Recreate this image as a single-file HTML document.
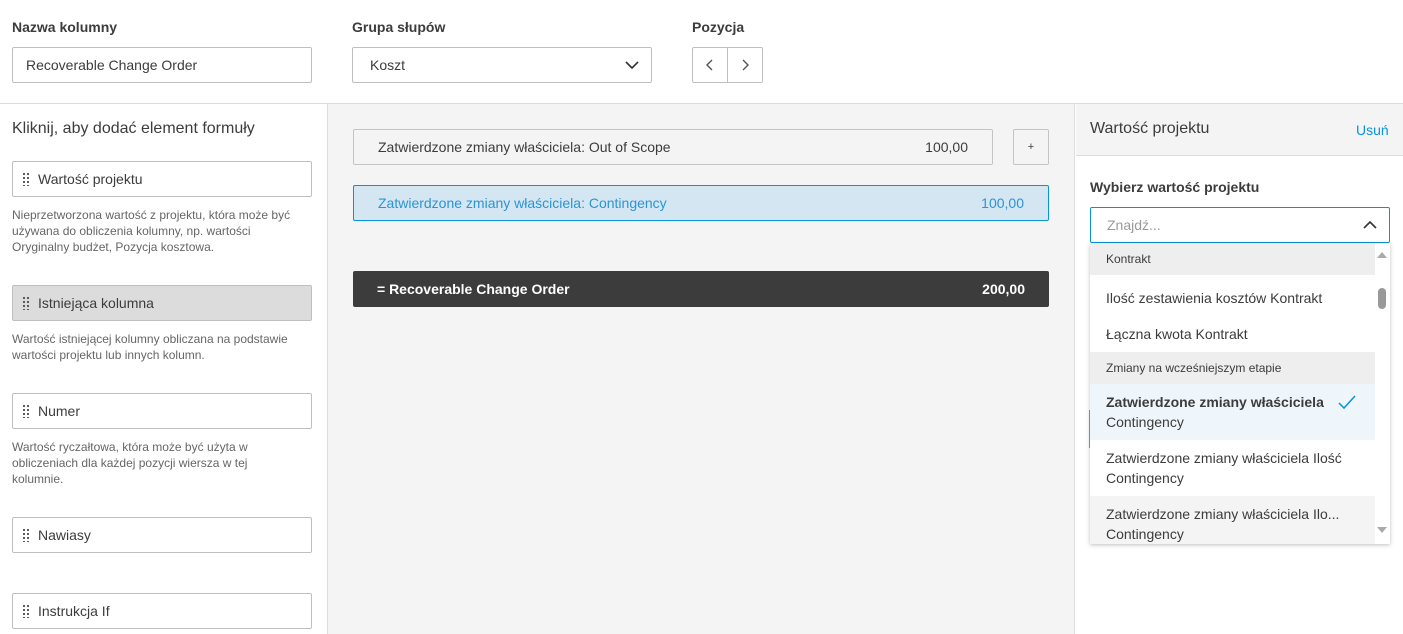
<!DOCTYPE html>
<html><head><meta charset="utf-8"><style>
*{box-sizing:border-box;margin:0;padding:0}
body{width:1403px;height:634px;overflow:hidden;background:#fff;font-family:"Liberation Sans",sans-serif;color:#3c3c3c;position:relative;font-size:14px}
.a{position:absolute}
.lbl{font-weight:bold;font-size:14px;color:#3c3c3c}
.inp{border:1px solid #bfbfbf;border-radius:2px;background:#fff;display:flex;align-items:center;padding-left:13px;font-size:14px}
.item{border:1px solid #bfbfbf;border-radius:2px;background:#fff;display:flex;align-items:center;font-size:14px;width:300px;height:36px;left:12px}
.dots{width:8px;height:14px;margin:0 8px 0 9px;background-image:radial-gradient(circle,#555 1px,transparent 1.3px);background-size:4px 4px}
.desc{font-size:12px;line-height:16px;color:#666;left:12px;width:310px;white-space:nowrap}
.dd{font-size:14px;color:#3c3c3c;padding-left:16px;display:flex;align-items:center;left:0;width:285px}
</style></head><body>
<div class="a lbl" style="left:12px;top:19px">Nazwa kolumny</div>
<div class="a lbl" style="left:352px;top:19px">Grupa słupów</div>
<div class="a lbl" style="left:692px;top:19px">Pozycja</div>
<div class="a inp" style="left:12px;top:47px;width:300px;height:36px">Recoverable Change Order</div>
<div class="a inp" style="left:352px;top:47px;width:300px;height:36px;padding-left:17px">Koszt
<svg class="a" style="right:12px;top:12px" width="14" height="10" viewBox="0 0 14 10"><path d="M1 2l6 6 6-6" fill="none" stroke="#333" stroke-width="1.6"/></svg></div>
<div class="a" style="left:692px;top:47px;width:71px;height:36px;border:1px solid #bfbfbf;border-radius:2px"><div class="a" style="left:34px;top:0;width:1px;height:34px;background:#bfbfbf"></div>
<svg class="a" style="left:12px;top:10px" width="10" height="14"><path d="M7 2L2 7l5 5" fill="none" stroke="#555" stroke-width="1.4"/></svg>
<svg class="a" style="left:47px;top:10px" width="10" height="14"><path d="M3 2l5 5-5 5" fill="none" stroke="#555" stroke-width="1.4"/></svg></div>
<div class="a" style="left:0;top:103px;width:1403px;height:1px;background:#dcdcdc"></div>
<div class="a" style="left:327px;top:104px;width:748px;height:530px;background:#f4f4f4;border-left:1px solid #dcdcdc;border-right:1px solid #dcdcdc"></div>
<div class="a" style="left:12px;top:120px;font-size:16px">Kliknij, aby dodać element formuły</div>
<div class="a item" style="top:161px"><div class="dots"></div>Wartość projektu</div>
<div class="a desc" style="top:207px">Nieprzetworzona wartość z projektu, która może być<br>używana do obliczenia kolumny, np. wartości<br>Oryginalny budżet, Pozycja kosztowa.</div>
<div class="a item" style="top:285px;background:#dcdcdc"><div class="dots"></div>Istniejąca kolumna</div>
<div class="a desc" style="top:331px">Wartość istniejącej kolumny obliczana na podstawie<br>wartości projektu lub innych kolumn.</div>
<div class="a item" style="top:393px"><div class="dots"></div>Numer</div>
<div class="a desc" style="top:439px">Wartość ryczałtowa, która może być użyta w<br>obliczeniach dla każdej pozycji wiersza w tej<br>kolumnie.</div>
<div class="a item" style="top:517px"><div class="dots"></div>Nawiasy</div>
<div class="a item" style="top:593px"><div class="dots"></div>Instrukcja If</div>
<div class="a" style="left:353px;top:129px;width:640px;height:36px;border:1px solid #c4c4c4;border-radius:2px;background:#f4f4f4;display:flex;align-items:center;padding:0 24px;justify-content:space-between"><span>Zatwierdzone zmiany właściciela: Out of Scope</span><span>100,00</span></div>
<div class="a" style="left:1013px;top:129px;width:36px;height:36px;border:1px solid #c4c4c4;border-radius:2px;text-align:center;line-height:34px;font-size:11px">+</div>
<div class="a" style="left:353px;top:185px;width:696px;height:36px;border:1px solid #0696d7;border-radius:2px;background:#d4e6f2;color:#2b95d3;display:flex;align-items:center;padding:0 24px;justify-content:space-between"><span>Zatwierdzone zmiany właściciela: Contingency</span><span>100,00</span></div>
<div class="a" style="left:353px;top:271px;width:696px;height:36px;border-radius:2px;background:#3c3c3c;color:#fff;font-weight:bold;display:flex;align-items:center;padding:0 24px;justify-content:space-between"><span>= Recoverable Change Order</span><span>200,00</span></div>
<div class="a" style="left:1076px;top:104px;width:327px;height:52px;background:#f4f4f4;border-bottom:1px solid #dcdcdc"></div>
<div class="a" style="left:1090px;top:120px;font-size:16px">Wartość projektu</div>
<div class="a" style="left:1356px;top:122px;color:#0696d7">Usuń</div>
<div class="a lbl" style="left:1090px;top:179px">Wybierz wartość projektu</div>
<div class="a" style="left:1089px;top:410px;width:1px;height:38px;background:#999"></div>
<div class="a inp" style="left:1090px;top:207px;width:300px;height:36px;border-color:#0696d7;padding-left:16px;color:#999">Znajdź...
<svg class="a" style="right:12px;top:12px" width="14" height="10"><path d="M1 8l6-6 6 6" fill="none" stroke="#333" stroke-width="1.6"/></svg></div>
<div class="a" style="left:1090px;top:243px;width:300px;height:301px;background:#fff;box-shadow:0 1px 4px rgba(0,0,0,.25);overflow:hidden">
<div class="a dd" style="top:0;height:32px;background:#eee;font-size:12px">Kontrakt</div>
<div class="a dd" style="top:37px;height:36px">Ilość zestawienia kosztów Kontrakt</div>
<div class="a dd" style="top:73px;height:36px">Łączna kwota Kontrakt</div>
<div class="a dd" style="top:109px;height:32px;background:#eee;font-size:12px">Zmiany na wcześniejszym etapie</div>
<div class="a dd" style="top:141px;height:56px;background:#eef5fb;line-height:20px;display:block;padding-top:8px"><b>Zatwierdzone zmiany właściciela</b><br>Contingency
<svg class="a" style="left:248px;top:10px" width="18" height="16"><path d="M1 9l5 5L17 2" fill="none" stroke="#0696d7" stroke-width="1.5"/></svg></div>
<div class="a dd" style="top:197px;height:56px;line-height:20px;display:block;padding-top:8px">Zatwierdzone zmiany właściciela Ilość<br>Contingency</div>
<div class="a dd" style="top:253px;height:56px;background:#f4f4f4;line-height:20px;display:block;padding-top:8px">Zatwierdzone zmiany właściciela Ilo...<br>Contingency</div>
<div class="a" style="left:287px;top:9px;width:0;height:0;border:5px solid transparent;border-bottom:6px solid #aaa;border-top:0"></div>
<div class="a" style="left:288px;top:45px;width:8px;height:21px;border-radius:4px;background:#999"></div>
<div class="a" style="left:287px;top:284px;width:0;height:0;border:5px solid transparent;border-top:6px solid #aaa;border-bottom:0"></div>
</div>
</body></html>
